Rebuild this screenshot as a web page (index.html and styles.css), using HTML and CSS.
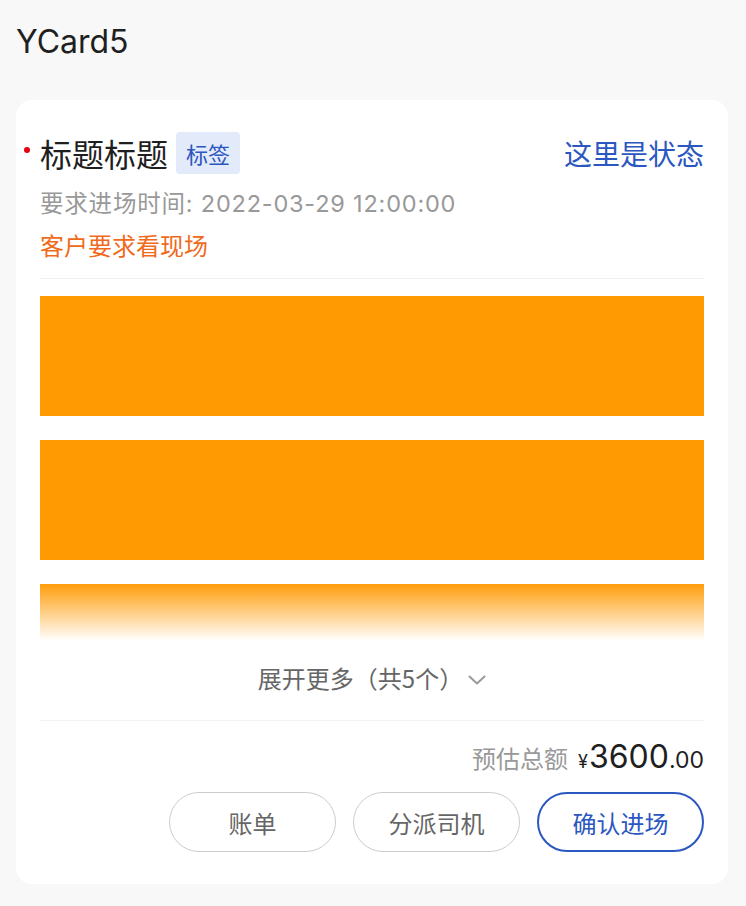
FILE: index.html
```html
<!DOCTYPE html>
<html lang="zh-CN">
<head>
<meta charset="utf-8">
<title>YCard5</title>
<link rel="stylesheet" href="styles.css">
</head>
<body>
<h1 class="page-title">YCard5</h1>
<div class="card">
  <div class="head">
    <div class="head-left">
      <span class="dot"></span>
      <span class="title">标题标题</span>
      <span class="tag">标签</span>
    </div>
    <span class="status">这里是状态</span>
  </div>
  <div class="meta">要求进场时间: 2022-03-29 12:00:00</div>
  <div class="note">客户要求看现场</div>
  <div class="divider"></div>
  <div class="list">
    <div class="block"></div>
    <div class="block"></div>
    <div class="block"></div>
    <div class="block"></div>
    <div class="block"></div>
    <div class="fade"></div>
  </div>
  <div class="more">
    <span>展开更多（共5个）</span>
    <svg class="chev" width="18" height="10" viewBox="0 0 18 10"><path d="M1.5 1.5 L9 8.5 L16.5 1.5" fill="none" stroke="#9a9a9a" stroke-width="2" stroke-linecap="round" stroke-linejoin="round"/></svg>
  </div>
  <div class="divider"></div>
  <div class="total">
    <span class="total-label">预估总额</span>
    <span class="yen">¥</span><span class="amount">3600</span><span class="cents">.00</span>
  </div>
  <div class="actions">
    <button class="btn">账单</button>
    <button class="btn">分派司机</button>
    <button class="btn btn-primary">确认进场</button>
  </div>
</div>
</body>
</html>
```

FILE: styles.css
```css
* { box-sizing: border-box; }
html, body { margin: 0; padding: 0; }
body {
  background: #f8f8f8;
  font-family: "Inter", "Noto Sans CJK SC", sans-serif;
  color: #1f1f1f;
  width: 746px;
  height: 906px;
  overflow: hidden;
}
.page-title {
  margin: 0;
  padding: 20px 16px 0;
  height: 100px;
  font-size: 32px;
  line-height: 44px;
  font-weight: 400;
  color: #1f1f1f;
}
.card {
  margin: 0 18px 0 16px;
  background: #fff;
  border-radius: 16px;
  padding: 32px 24px 32px;
}
.head {
  display: flex;
  justify-content: space-between;
  align-items: center;
  height: 42px;
}
.head-left {
  display: flex;
  align-items: center;
  position: relative;
}
.dot {
  position: absolute;
  left: -16px;
  top: 15px;
  width: 6px;
  height: 6px;
  border-radius: 50%;
  background: #e60012;
}
.title {
  font-family: "Noto Sans CJK SC", sans-serif;
  font-size: 32px;
  line-height: 42px;
  color: #1f1f1f;
}
.tag {
  margin-left: 8px;
  height: 42px;
  line-height: 42px;
  padding: 0 10px;
  background: #e3eaf9;
  color: #2b57c0;
  font-family: "Noto Sans CJK SC", sans-serif;
  font-size: 22px;
  border-radius: 4px;
}
.status {
  font-family: "Noto Sans CJK SC", sans-serif;
  font-size: 28px;
  line-height: 42px;
  color: #2b57c0;
}
.meta {
  margin-top: 12px;
  font-size: 23.5px;
  line-height: 36px;
  color: #999;
  letter-spacing: 0.8px;
}
.note {
  margin-top: 5px;
  font-family: "Noto Sans CJK SC", sans-serif;
  font-size: 24px;
  line-height: 36px;
  color: #f06a1c;
}
.divider {
  height: 1px;
  background: #f2f2f2;
}
.note + .divider { margin-top: 15px; }
.list {
  position: relative;
  margin-top: 17px;
  height: 348px;
  overflow: hidden;
  display: flex;
  flex-direction: column;
  gap: 24px;
}
.block {
  flex: 0 0 120px;
  background: #ff9a03;
}
.fade {
  position: absolute;
  left: 0;
  right: 0;
  bottom: 0;
  height: 62px;
  background: linear-gradient(to bottom, rgba(255,255,255,0), #fff 95%);
}
.more {
  display: flex;
  justify-content: center;
  align-items: center;
  padding: 20px 0 28px;
  line-height: 28px;
  font-family: "Noto Sans CJK SC", sans-serif;
  font-size: 24px;
  color: #666;
}
.chev { margin-left: 5px; margin-top: 4px; }
.total {
  margin-top: 16px;
  display: flex;
  justify-content: flex-end;
  align-items: baseline;
  line-height: 40px;
}
.total-label {
  font-family: "Noto Sans CJK SC", sans-serif;
  font-size: 24px;
  color: #999;
  margin-right: 10px;
}
.yen { font-size: 18px; color: #1f1f1f; margin-right: 1px; }
.amount { font-size: 32px; color: #1f1f1f; }
.cents { font-size: 23px; color: #1f1f1f; }
.actions {
  margin-top: 10px;
  display: flex;
  justify-content: flex-end;
  gap: 17px;
}
.btn {
  width: 167px;
  height: 60px;
  border-radius: 30px;
  border: 1.5px solid #cccccc;
  background: #fff;
  font-family: "Noto Sans CJK SC", sans-serif;
  font-size: 24px;
  color: #666;
  padding: 0;
}
.btn-primary {
  border: 2px solid #2b57c0;
  color: #2b57c0;
}
```
